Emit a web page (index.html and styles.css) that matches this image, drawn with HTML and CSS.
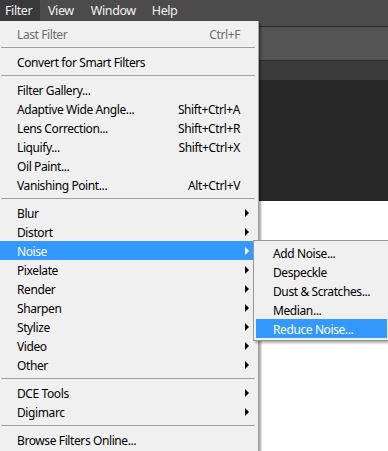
FILE: index.html
```html
<!DOCTYPE html>
<html lang="en">
<head>
    <meta charset="UTF-8">
    <title>Filter Menu</title>
    <link rel="stylesheet" href="styles.css">
</head>
<body>
    <div class="menubar">
        <span class="bar-item active">Filter</span>
        <span class="bar-item">View</span>
        <span class="bar-item">Window</span>
        <span class="bar-item">Help</span>
    </div>
    <div class="workspace">
        <div class="tabs"></div>
        <div class="options"></div>
        <div class="panel"></div>
        <div class="canvas"></div>
    </div>

    <div class="menu">
        <div class="item disabled"><span class="label">Last Filter</span><span class="key">Ctrl+F</span></div>
        <div class="sep"></div>
        <div class="item"><span class="label">Convert for Smart Filters</span></div>
        <div class="sep"></div>
        <div class="item"><span class="label">Filter Gallery...</span></div>
        <div class="item"><span class="label">Adaptive Wide Angle...</span><span class="key">Shift+Ctrl+A</span></div>
        <div class="item"><span class="label">Lens Correction...</span><span class="key">Shift+Ctrl+R</span></div>
        <div class="item"><span class="label">Liquify...</span><span class="key">Shift+Ctrl+X</span></div>
        <div class="item"><span class="label">Oil Paint...</span></div>
        <div class="item"><span class="label">Vanishing Point...</span><span class="key">Alt+Ctrl+V</span></div>
        <div class="sep"></div>
        <div class="item sub"><span class="label">Blur</span></div>
        <div class="item sub"><span class="label">Distort</span></div>
        <div class="item sub selected"><span class="label">Noise</span></div>
        <div class="item sub"><span class="label">Pixelate</span></div>
        <div class="item sub"><span class="label">Render</span></div>
        <div class="item sub"><span class="label">Sharpen</span></div>
        <div class="item sub"><span class="label">Stylize</span></div>
        <div class="item sub"><span class="label">Video</span></div>
        <div class="item sub"><span class="label">Other</span></div>
        <div class="sep"></div>
        <div class="item sub"><span class="label">DCE Tools</span></div>
        <div class="item sub"><span class="label">Digimarc</span></div>
        <div class="sep"></div>
        <div class="item"><span class="label">Browse Filters Online...</span></div>
    </div>

    <div class="submenu">
        <div class="item"><span class="label">Add Noise...</span></div>
        <div class="item"><span class="label">Despeckle</span></div>
        <div class="item"><span class="label">Dust &amp; Scratches...</span></div>
        <div class="item"><span class="label">Median...</span></div>
        <div class="item selected"><span class="label">Reduce Noise...</span></div>
    </div>
</body>
</html>
```

FILE: styles.css
```css
body {
    margin: 0;
    width: 388px;
    height: 451px;
    overflow: hidden;
    position: relative;
    font-family: "Noto Sans", "Open Sans", sans-serif;
    font-size: 12px;
    letter-spacing: -0.4px;
    background-color: #fff;
}
.menubar {
    display: flex;
    height: 21px;
    padding-bottom: 5px;
    background-color: #4b4b4b;
    border-bottom: 1px solid #2a2a2a;
}
.bar-item {
    height: 21px;
    line-height: 21px;
    color: #f2f2f2;
    padding: 0 5px;
    margin-right: 3px;
    font-size: 12.5px;
}
.bar-item:nth-child(2) {
    margin-right: 7px;
}
.bar-item:nth-child(3) {
    margin-right: 6px;
}
.bar-item.active {
    width: 30px;
    background-color: #393939;
}
.workspace {
    display: flex;
    flex-direction: column;
}
.tabs {
    height: 33px;
    background-color: #545454;
    border-bottom: 1px solid #2e2e2e;
}
.options {
    height: 19px;
    background-color: #3b3b3b;
}
.panel {
    height: 121px;
    background-color: #282828;
}
.canvas {
    height: 250px;
    background-color: #fff;
}
.menu {
    position: absolute;
    left: 0;
    top: 21px;
    width: 258px;
    padding: 3px 0;
    background-color: #f0f0f0;
    border-right: 1px solid #a0a0a0;
    box-shadow: 2px 2px 2px rgba(0, 0, 0, 0.35);
}
.item {
    display: flex;
    align-items: center;
    height: 19px;
    padding: 1px 18px 0 17px;
    box-sizing: border-box;
    color: #000;
    position: relative;
}
.label {
    flex: 1;
    white-space: nowrap;
}
.key {
    white-space: nowrap;
}
.item.disabled {
    color: #6d6d6d;
}
.item.selected {
    background-color: #3399ff;
    color: #fff;
}
.sub::after {
    content: "";
    position: absolute;
    left: 245px;
    top: 6px;
    border-left: 4px solid #000;
    border-top: 4px solid transparent;
    border-bottom: 4px solid transparent;
}
.sub.selected::after {
    border-left-color: #fff;
}
.sep {
    height: 9px;
    display: flex;
    align-items: center;
    padding: 0 3px 0 1px;
}
.sep::before {
    content: "";
    flex: 1;
    height: 1px;
    background-color: #a0a0a0;
}
.submenu {
    position: absolute;
    left: 253px;
    top: 240px;
    width: 131px;
    padding: 2px;
    background-color: #f0f0f0;
    border: 1px solid #979797;
    box-shadow: 2px 2px 2px rgba(0, 0, 0, 0.3);
}
.submenu .item {
    padding: 1px 4px 0 17px;
}
```
